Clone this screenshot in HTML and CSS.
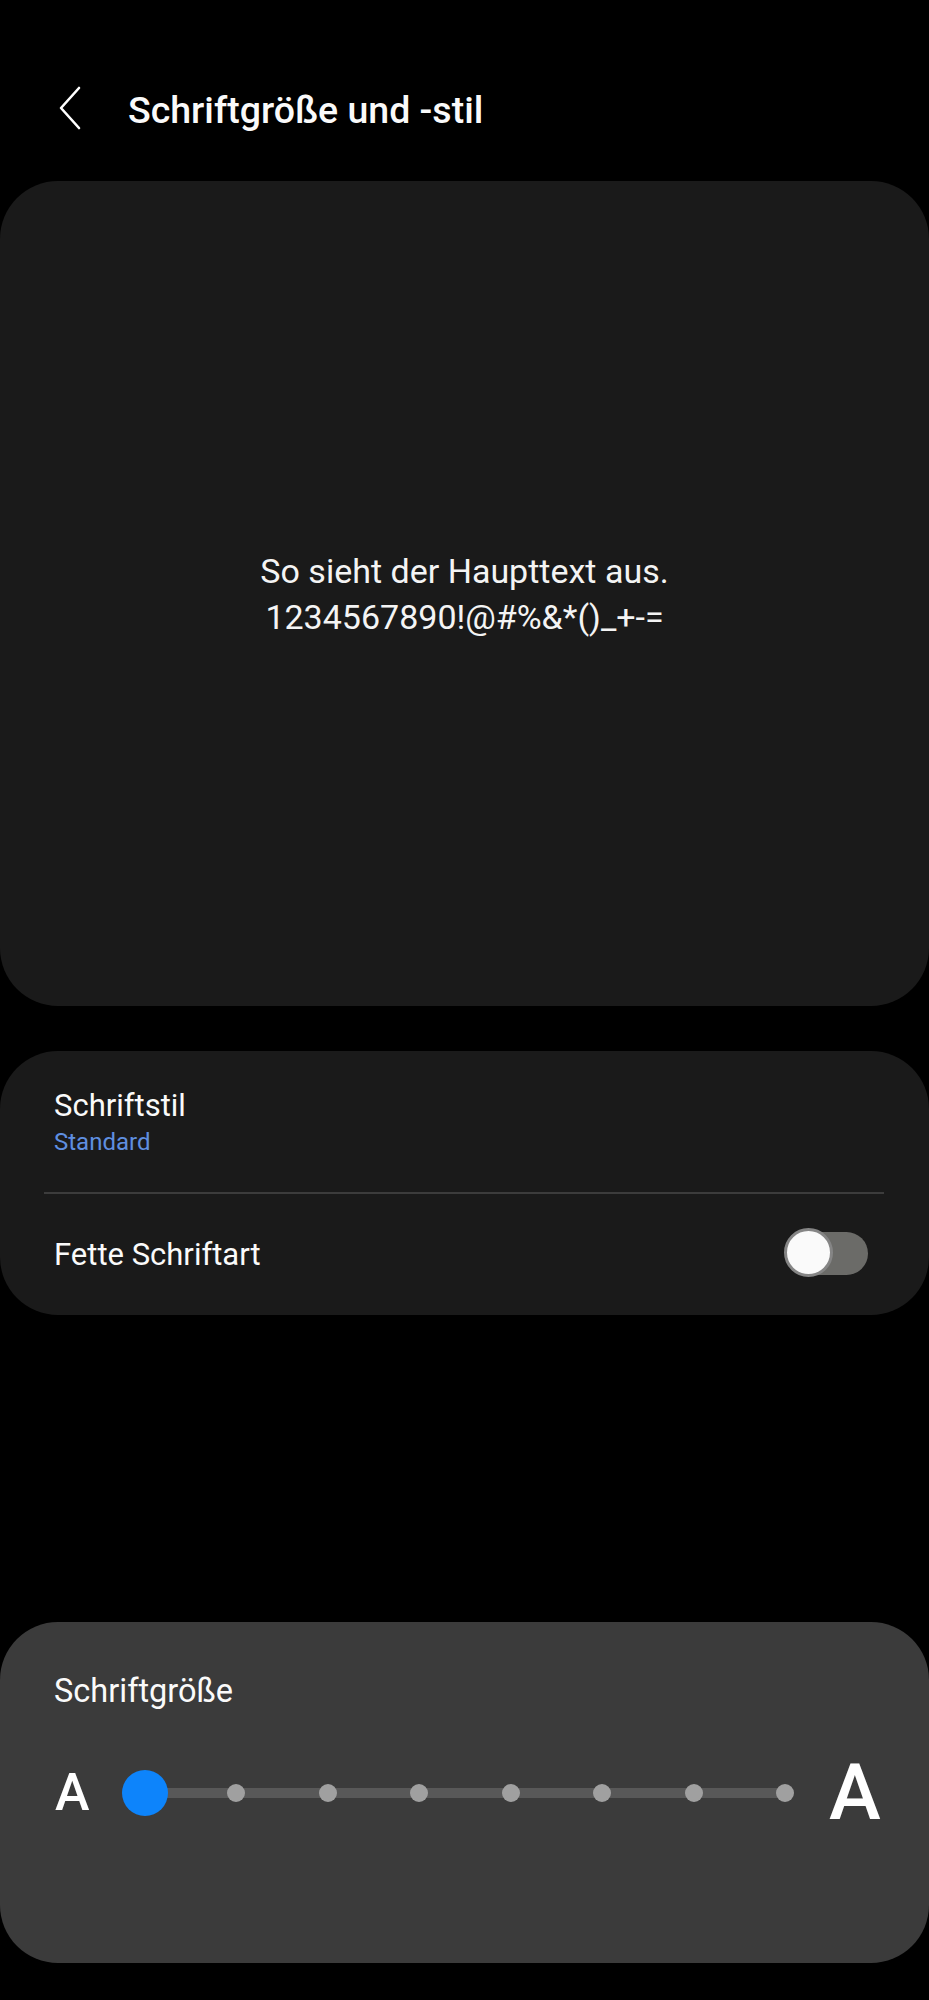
FILE: index.html
```html
<!DOCTYPE html>
<html lang="de">
<head>
<meta charset="utf-8">
<title>Schriftgröße und -stil</title>
<link rel="stylesheet" href="styles.css">
</head>
<body>
<header class="appbar">
  <svg class="back" width="24" height="44" viewBox="0 0 24 44" aria-hidden="true">
    <path d="M21 2 L3 22 L21 42" fill="none" stroke="#fff" stroke-width="2.6" stroke-linecap="round" stroke-linejoin="round"/>
  </svg>
  <h1 class="title">Schriftgröße und -stil</h1>
</header>

<section class="card preview">
  <p class="preview-text">So sieht der Haupttext aus.<br>1234567890!@#%&amp;*()_+-=</p>
</section>

<section class="card options">
  <div class="row row-style">
    <div class="label">Schriftstil</div>
    <div class="sub">Standard</div>
  </div>
  <div class="divider"></div>
  <div class="row row-bold">
    <div class="label">Fette Schriftart</div>
    <div class="toggle"><span class="track"></span><span class="thumb"></span></div>
  </div>
</section>

<section class="card size">
  <div class="label size-label">Schriftgröße</div>
  <div class="slider-row">
    <span class="a-small">A</span>
    <div class="steps">
      <span class="knob active"></span>
      <span class="knob"></span>
      <span class="knob"></span>
      <span class="knob"></span>
      <span class="knob"></span>
      <span class="knob"></span>
      <span class="knob"></span>
      <span class="knob"></span>
    </div>
    <span class="a-big">A</span>
  </div>
</section>
</body>
</html>
```

FILE: styles.css
```css
* { box-sizing: border-box; }
html, body {
  margin: 0;
  padding: 0;
  background: #000;
}
body {
  width: 929px;
  font-family: Roboto, "Noto Sans", "Liberation Sans", sans-serif;
  color: #fafafa;
}

.appbar {
  display: flex;
  align-items: center;
  padding: 88px 0 0 58px;
  height: 132px;
}
.back { display: block; margin-top: -4px; }
.title {
  margin: 0 0 0 46px;
  font-size: 37.5px;
  line-height: 44px;
  font-weight: 500;
  color: #fafafa;
}

.card {
  background: #1a1a1a;
  border-radius: 58px;
}

.preview {
  margin-top: 49px;
  height: 825px;
  display: flex;
  align-items: center;
  justify-content: center;
}
.preview-text {
  margin: 0;
  text-align: center;
  font-size: 34px;
  line-height: 46px;
  color: #f4f4f4;
}

.options {
  margin-top: 45px;
  height: 264px;
  padding-top: 37px;
}
.row-style { padding: 0 54px; height: 104px; }
.label {
  font-size: 31px;
  line-height: 36px;
  color: #fafafa;
}
.sub {
  margin-top: 4px;
  font-size: 24px;
  line-height: 28px;
  color: #5f8fe0;
}
.divider {
  height: 2px;
  margin: 0 45px 0 44px;
  background: #3c3c3c;
}
.row-bold {
  display: flex;
  align-items: center;
  justify-content: space-between;
  height: 121px;
  padding: 0 61px 0 54px;
}
.toggle {
  position: relative;
  width: 84px;
  height: 50px;
  margin-top: -4px;
}
.track {
  position: absolute;
  right: 0;
  top: 4px;
  width: 80px;
  height: 43px;
  border-radius: 22px;
  background: #6b6b68;
}
.thumb {
  position: absolute;
  left: 0;
  top: 0;
  width: 49px;
  height: 49px;
  border-radius: 50%;
  background: #fafafa;
  border: 3px solid #858585;
}

.size {
  margin-top: 307px;
  background: #3b3b3b;
  height: 341px;
  padding-top: 51px;
}
.size-label {
  padding-left: 54px;
  font-size: 32.5px;
}
.slider-row {
  display: flex;
  align-items: center;
  height: 60px;
  margin-top: 54px;
  padding-left: 55px;
}
.a-small {
  width: 44px;
  font-size: 52px;
  line-height: 52px;
  font-weight: 500;
  color: #fff;
}
.steps {
  width: 732px;
  height: 60px;
  display: grid;
  grid-template-columns: repeat(8, 1fr);
  align-items: center;
  justify-items: center;
  background: linear-gradient(#585858, #585858) no-repeat center / calc(100% - 91.5px) 10px;
}
.knob {
  width: 18px;
  height: 18px;
  border-radius: 50%;
  background: #a0a0a0;
}
.knob.active {
  width: 46px;
  height: 46px;
  background: #0d84fb;
}
.a-big {
  margin-left: -2px;
  font-size: 78px;
  line-height: 78px;
  font-weight: 500;
  color: #fff;
}
```
